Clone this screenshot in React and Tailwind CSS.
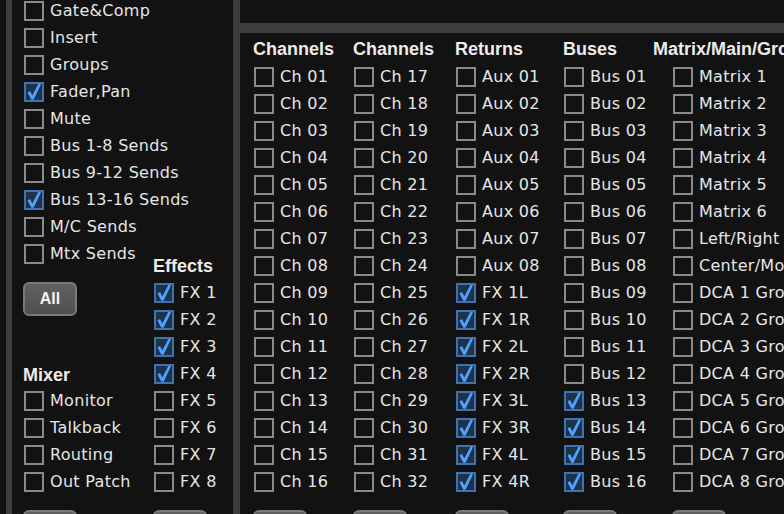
import React from "react";

const FONT = { fontFamily: '"DejaVu Sans", Verdana, sans-serif', letterSpacing: "0.3px" };
const HFONT = { fontFamily: '"Liberation Sans", Arial, sans-serif' };

function Box({ checked }) {
  if (checked) {
    return (
      <div className="w-[20px] h-[20px] shrink-0 border-2 border-[#3f72ae] bg-[#1e3249] relative">
        <svg viewBox="0 0 20 20" className="absolute -left-[2px] -top-[2px] w-[20px] h-[20px]">
          <path d="M3.5 10.5 L6 9 L8.3 13.6 L14.6 1.5 L17 2.2 L9.6 17.8 L7.3 17.8 Z" fill="#4ea2ff" />
        </svg>
      </div>
    );
  }
  return <div className="w-[20px] h-[20px] shrink-0 border-2 border-[#8a8a8a] bg-[#121212]" />;
}

function Row({ label, checked }) {
  return (
    <div className="h-[27px] flex items-center gap-[6px] whitespace-nowrap text-[16px] text-[#e6e6e6]" style={FONT}>
      <div className="ml-px">
        <Box checked={checked} />
      </div>
      <span>{label}</span>
    </div>
  );
}

function Btn({ children }) {
  return (
    <div
      className="w-[54px] h-[34px] rounded-[6px] border-2 border-[#7a7a7a] bg-gradient-to-b from-[#606060] to-[#505050] flex items-center justify-center text-[16px] font-bold text-[#f2f2f2]"
      style={HFONT}
    >
      {children}
    </div>
  );
}

function Header({ children, className = "" }) {
  return (
    <div className={"h-[27px] flex items-center text-[18px] font-bold text-[#ececec] whitespace-nowrap " + className} style={HFONT}>
      {children}
    </div>
  );
}

const pad = (n) => String(n).padStart(2, "0");

export default function App() {
  const topList = [
    ["Gate&Comp", false],
    ["Insert", false],
    ["Groups", false],
    ["Fader,Pan", true],
    ["Mute", false],
    ["Bus 1-8 Sends", false],
    ["Bus 9-12 Sends", false],
    ["Bus 13-16 Sends", true],
    ["M/C Sends", false],
    ["Mtx Sends", false],
  ];
  const fx = Array.from({ length: 8 }, (_, i) => [`FX ${i + 1}`, i < 4]);
  const mixer = ["Monitor", "Talkback", "Routing", "Out Patch"];

  const ch1 = Array.from({ length: 16 }, (_, i) => [`Ch ${pad(i + 1)}`, false]);
  const ch2 = Array.from({ length: 16 }, (_, i) => [`Ch ${pad(i + 17)}`, false]);
  const returns = [
    ...Array.from({ length: 8 }, (_, i) => [`Aux ${pad(i + 1)}`, false]),
    ...["FX 1L", "FX 1R", "FX 2L", "FX 2R", "FX 3L", "FX 3R", "FX 4L", "FX 4R"].map((l) => [l, true]),
  ];
  const buses = Array.from({ length: 16 }, (_, i) => [`Bus ${pad(i + 1)}`, i >= 12]);
  const matrix = [
    ...Array.from({ length: 6 }, (_, i) => [`Matrix ${i + 1}`, false]),
    ["Left/Right", false],
    ["Center/Mono", false],
    ...Array.from({ length: 8 }, (_, i) => [`DCA ${i + 1} Groups`, false]),
  ];

  const cols = [
    { title: "Channels", items: ch1, w: "w-[100px]" },
    { title: "Channels", items: ch2, w: "w-[102px]" },
    { title: "Returns", items: returns, w: "w-[108px]" },
    { title: "Buses", items: buses, w: "w-[109px]" },
    { title: "Matrix/Main/Groups", items: matrix, w: "w-[140px]", hdr: "-ml-[19px]" },
  ];

  return (
    <div className="w-[784px] h-[514px] overflow-hidden bg-[#3d3d3d] flex">
      <div className="w-[6px] bg-[#121212] shrink-0" />
      <div className="w-[6px] shrink-0" />
      {/* left panel */}
      <div className="w-[221px] shrink-0 bg-[#121212] overflow-hidden pl-[11px]">
        <div className="-mt-[3px]">
          {topList.map(([l, c]) => (
            <Row key={l} label={l} checked={c} />
          ))}
        </div>
        <div className="flex -mt-[13px]">
          <div className="w-[130px] shrink-0 flex flex-col">
            <div className="h-[25px]" />
            <div className="h-[81px] pt-[3px]">
              <Btn>All</Btn>
            </div>
            <Header className="pt-[3px]">Mixer</Header>
            {mixer.map((l) => (
              <Row key={l} label={l} checked={false} />
            ))}
          </div>
          <div className="flex flex-col">
            <div className="h-[25px] flex items-center text-[18px] font-bold text-[#ececec]" style={HFONT}>
              Effects
            </div>
            {fx.map(([l, c]) => (
              <Row key={l} label={l} checked={c} />
            ))}
          </div>
        </div>
        <div className="flex mt-[15px]">
          <div className="w-[130px] shrink-0">
            <Btn />
          </div>
          <Btn />
        </div>
      </div>
      <div className="w-[7px] shrink-0" />
      {/* right */}
      <div className="flex-1 flex flex-col min-w-0">
        <div className="h-[23px] bg-[#121212] shrink-0" />
        <div className="h-[10px] shrink-0" />
        <div className="flex-1 bg-[#121212] overflow-hidden pl-[13px] pt-[3px]">
          <div className="flex">
            {cols.map((c, i) => (
              <div key={i} className={c.w + " shrink-0 flex flex-col"}>
                <Header className={c.hdr || ""}>{c.title}</Header>
                {c.items.map(([l, ch]) => (
                  <Row key={l} label={l} checked={ch} />
                ))}
                <div className="mt-[15px]">
                  <Btn />
                </div>
              </div>
            ))}
          </div>
        </div>
      </div>
    </div>
  );
}
